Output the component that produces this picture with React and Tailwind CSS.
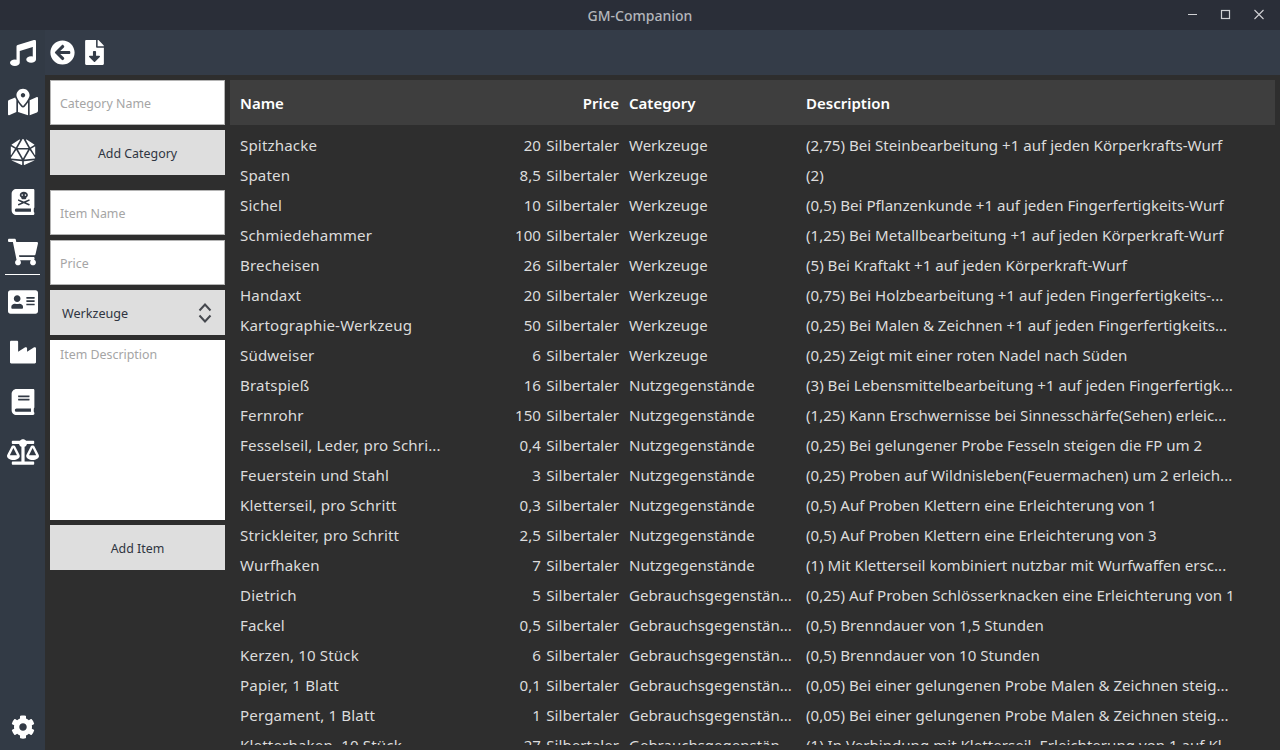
import React from "react";
import { FaMusic, FaArrowCircleLeft, FaFileDownload, FaMapMarkedAlt, FaDiceD20, FaBookDead, FaShoppingCart, FaAddressCard, FaIndustry, FaBook, FaBalanceScale, FaCog } from "react-icons/fa";

const W = "Werkzeuge", N = "Nutzgegenstände", G = "Gebrauchsgegenstän...";
const rows = [
  ["Spitzhacke", "20 Silbertaler", W, "(2,75) Bei Steinbearbeitung +1 auf jeden Körperkrafts-Wurf"],
  ["Spaten", "8,5 Silbertaler", W, "(2)"],
  ["Sichel", "10 Silbertaler", W, "(0,5) Bei Pflanzenkunde +1 auf jeden Fingerfertigkeits-Wurf"],
  ["Schmiedehammer", "100 Silbertaler", W, "(1,25) Bei Metallbearbeitung +1 auf jeden Körperkraft-Wurf"],
  ["Brecheisen", "26 Silbertaler", W, "(5) Bei Kraftakt +1 auf jeden Körperkraft-Wurf"],
  ["Handaxt", "20 Silbertaler", W, "(0,75) Bei Holzbearbeitung +1 auf jeden Fingerfertigkeits-..."],
  ["Kartographie-Werkzeug", "50 Silbertaler", W, "(0,25) Bei Malen & Zeichnen +1 auf jeden Fingerfertigkeits..."],
  ["Südweiser", "6 Silbertaler", W, "(0,25) Zeigt mit einer roten Nadel nach Süden"],
  ["Bratspieß", "16 Silbertaler", N, "(3) Bei Lebensmittelbearbeitung +1 auf jeden Fingerfertigk..."],
  ["Fernrohr", "150 Silbertaler", N, "(1,25) Kann Erschwernisse bei Sinnesschärfe(Sehen) erleic..."],
  ["Fesselseil, Leder, pro Schri...", "0,4 Silbertaler", N, "(0,25) Bei gelungener Probe Fesseln steigen die FP um 2"],
  ["Feuerstein und Stahl", "3 Silbertaler", N, "(0,25) Proben auf Wildnisleben(Feuermachen) um 2 erleich..."],
  ["Kletterseil, pro Schritt", "0,3 Silbertaler", N, "(0,5) Auf Proben Klettern eine Erleichterung von 1"],
  ["Strickleiter, pro Schritt", "2,5 Silbertaler", N, "(0,5) Auf Proben Klettern eine Erleichterung von 3"],
  ["Wurfhaken", "7 Silbertaler", N, "(1) Mit Kletterseil kombiniert nutzbar mit Wurfwaffen ersc..."],
  ["Dietrich", "5 Silbertaler", G, "(0,25) Auf Proben Schlösserknacken eine Erleichterung von 1"],
  ["Fackel", "0,5 Silbertaler", G, "(0,5) Brenndauer von 1,5 Stunden"],
  ["Kerzen, 10 Stück", "6 Silbertaler", G, "(0,5) Brenndauer von 10 Stunden"],
  ["Papier, 1 Blatt", "0,1 Silbertaler", G, "(0,05) Bei einer gelungenen Probe Malen & Zeichnen steig..."],
  ["Pergament, 1 Blatt", "1 Silbertaler", G, "(0,05) Bei einer gelungenen Probe Malen & Zeichnen steig..."],
  ["Kletterhaken, 10 Stück", "27 Silbertaler", G, "(1) In Verbindung mit Kletterseil, Erleichterung von 1 auf Kl..."],
];

const side = [
  [FaMapMarkedAlt, 30], [FaDiceD20, 26], [FaBookDead, 26], [FaShoppingCart, 30],
  [FaAddressCard, 30], [FaIndustry, 26], [FaBook, 26], [FaBalanceScale, 32],
];

function Input({ label }) {
  return (
    <div className="h-[45px] shrink-0 bg-white border border-[#b4b4b4] pl-[9px] pt-[3px] flex items-center text-[12.4px] text-[#a5a5a5]">
      {label}
    </div>
  );
}

function Btn({ label }) {
  return (
    <button className="h-[45px] shrink-0 bg-[#dedede] pt-[4px] text-[12.4px] text-[#2f3541] flex items-center justify-center">
      {label}
    </button>
  );
}

export default function App() {
  return (
    <div className="w-[1280px] h-[750px] flex flex-col overflow-hidden bg-[#2e2e2e] font-['Noto_Sans',sans-serif]">
      <div className="h-[30px] shrink-0 bg-[#2a2e38] relative flex items-center justify-center text-[14px] font-medium text-[#b4b6bb]">
        GM-Companion
        <div className="absolute right-0 top-0 h-[30px] flex items-center">
          <svg width="116" height="30" viewBox="0 0 116 30" fill="none" stroke="#d0d1d4" strokeWidth="1">
            <path d="M24 14.5h9" />
            <rect x="57.5" y="10.5" width="8" height="8" strokeWidth="1.2" />
            <path d="M90.5 10l9 9M99.5 10l-9 9" strokeWidth="1.1" />
          </svg>
        </div>
      </div>
      <div className="flex-1 min-h-0 flex">
        <div className="w-[45px] shrink-0 bg-[#323a45] flex flex-col text-white">
          <div className="h-[45px] shrink-0 flex items-center justify-center mb-[2px]">
            <FaMusic size={26} />
          </div>
          {side.map(([Icon, size], i) => (
            <div key={i} className="h-[50px] shrink-0 flex items-center justify-center relative">
              <Icon size={size} />
              {i === 3 && <div className="absolute left-[5px] right-[5px] bottom-[2px] h-px bg-white" />}
            </div>
          ))}
          <div className="mt-auto h-[46px] shrink-0 flex items-center justify-center">
            <FaCog size={24} />
          </div>
        </div>
        <div className="flex-1 min-w-0 flex flex-col">
          <div className="h-[45px] shrink-0 bg-[#343c48] flex items-center pl-[5px] gap-[7px] text-white">
            <FaArrowCircleLeft size={25} />
            <FaFileDownload size={25} />
          </div>
          <div className="flex-1 min-h-0 flex gap-[5px] p-[5px]">
            <div className="w-[175px] shrink-0 flex flex-col gap-[5px]">
              <Input label="Category Name" />
              <Btn label="Add Category" />
              <div className="h-[5px] shrink-0" />
              <Input label="Item Name" />
              <Input label="Price" />
              <div className="h-[45px] shrink-0 bg-[#dedede] text-[12.6px] text-[#2f3541] flex items-center justify-between pl-3 pr-[13px]">
                <span className="pt-[3px]">Werkzeuge</span>
                <svg width="14" height="22" viewBox="0 0 14 22" fill="none" stroke="#45484e" strokeWidth="2">
                  <path d="M1.5 8.5L7 2.5l5.5 6M1.5 13.5L7 19.5l5.5-6" />
                </svg>
              </div>
              <div className="h-[180px] shrink-0 bg-white pl-[10px] pt-[5px] text-[12.4px] leading-[20px] text-[#a5a5a5]">Item Description</div>
              <Btn label="Add Item" />
            </div>
            <div className="flex-1 min-w-0 overflow-hidden text-[15.1px] text-[#dcdcdc]">
              <div className="h-[45px] mb-[5px] pt-[2px] bg-[#3e3e3e] flex items-center text-[15px] font-semibold text-white">
                <div className="w-[220px] pl-[10px]">Name</div>
                <div className="w-[169px] text-right">Price</div>
                <div className="w-[177px] pl-[10px]">Category</div>
                <div className="pl-[10px]">Description</div>
              </div>
              {rows.map((r, i) => (
                <div key={i} className="h-[30px] flex items-center whitespace-nowrap">
                  <div className="w-[220px] pl-[10px] tracking-[0.15px]">{r[0]}</div>
                  <div className="w-[169px] text-right [word-spacing:1.5px]">{r[1]}</div>
                  <div className="w-[177px] pl-[10px] text-[15px]">{r[2]}</div>
                  <div className="pl-[10px]">{r[3]}</div>
                </div>
              ))}
            </div>
          </div>
        </div>
      </div>
    </div>
  );
}
